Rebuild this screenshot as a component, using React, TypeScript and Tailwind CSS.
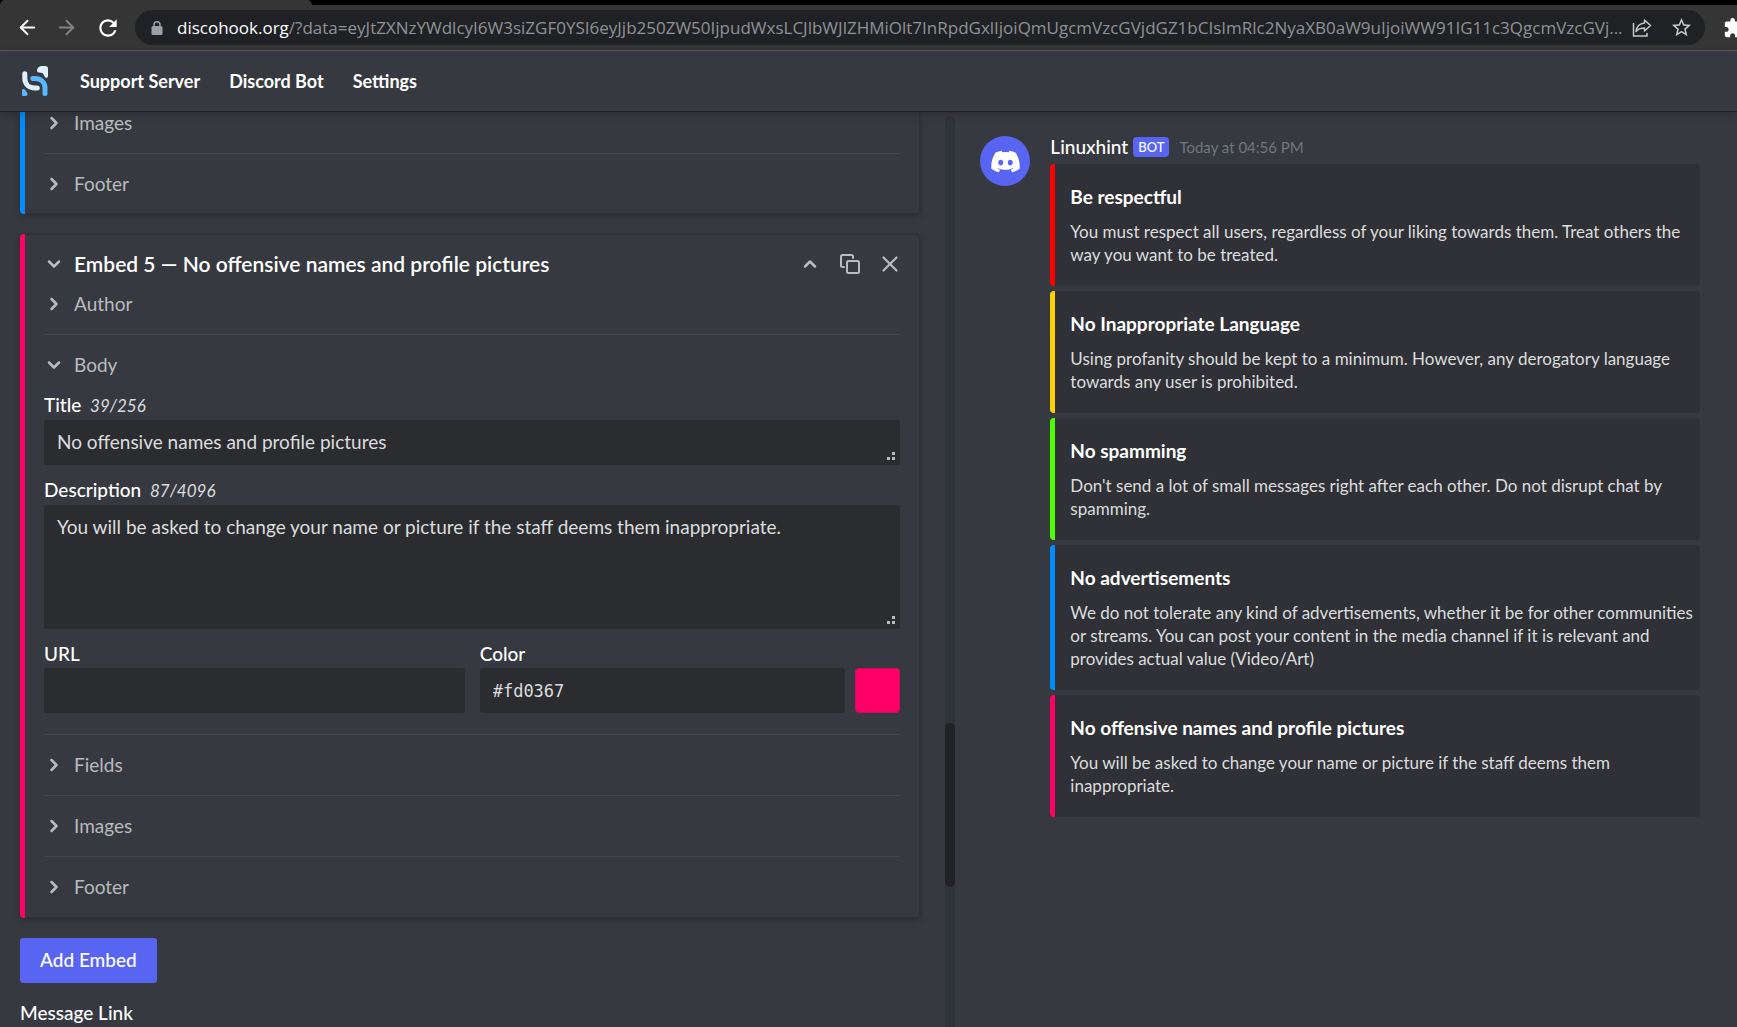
import React from 'react';
import { ChevronDown, ChevronRight, ChevronUp, X, ArrowLeft, ArrowRight } from 'lucide-react';
import { FaDiscord } from 'react-icons/fa';
import { MdRefresh, MdStarBorder, MdExtension } from 'react-icons/md';

const urlQuery =
  '/?data=eyJtZXNzYWdlcyI6W3siZGF0YSI6eyJjb250ZW50IjpudWxsLCJlbWJlZHMiOlt7InRpdGxlIjoiQmUgcmVzcGVjdGZ1bCIsImRlc2NyaXB0aW9uIjoiWW91IG11c3QgcmVzcGVj...';

const embeds = [
  {
    title: 'Be respectful',
    description: 'You must respect all users, regardless of your liking towards them. Treat others the way you want to be treated.',
    bar: 'border-[#ff0000]',
  },
  {
    title: 'No Inappropriate Language',
    description: 'Using profanity should be kept to a minimum. However, any derogatory language towards any user is prohibited.',
    bar: 'border-[#ffd000]',
  },
  {
    title: 'No spamming',
    description: "Don't send a lot of small messages right after each other. Do not disrupt chat by spamming.",
    bar: 'border-[#4dff00]',
  },
  {
    title: 'No advertisements',
    description:
      'We do not tolerate any kind of advertisements, whether it be for other communities or streams. You can post your content in the media channel if it is relevant and provides actual value (Video/Art)',
    bar: 'border-[#008cff]',
  },
  {
    title: 'No offensive names and profile pictures',
    description: 'You will be asked to change your name or picture if the staff deems them inappropriate.',
    bar: 'border-[#ff0066]',
  },
];

const Logo: React.FC = () => (
  <svg width="26" height="30" viewBox="0 0 26 30" fill="none" strokeLinecap="round">
    <path d="M2.800 7.800V12c0 6 4 10 10 10h2.500" stroke="#e0f0ff" strokeWidth="5" />
    <path d="M10.800 12.600h2c6.500 0 10.200 4 10.200 9.500v5.300" stroke="#58b9ff" strokeWidth="5" />
    <path d="M15 4C15.500 1.500 17.500 0 20 0h3C25 0 26 1 26 2.500V10c0 2-2 2.500-3 1L20.500 7 17 6.500C15.500 6.300 14.800 5.300 15 4Z" fill="#e0f0ff" />
    <path d="M0 24.500c0-1.500 2-2 3-.7l2 2.700c1 1.800.5 3.500-1.500 3.500h-2C.5 30 0 29.500 0 28.500Z" fill="#58b9ff" />
  </svg>
);

const LockIcon: React.FC = () => (
  <svg className="shrink-0" width="12" height="14" viewBox="0 0 12 14" fill="none">
    <rect x="0.500" y="5" width="11" height="9" rx="1.500" fill="#9aa0a6" />
    <path d="M3 6V3.800a3 3 0 0 1 6 0V6" stroke="#9aa0a6" strokeWidth="1.500" />
  </svg>
);

const ShareIcon: React.FC = () => (
  <svg width="20" height="20" viewBox="0 0 20 20" fill="none" stroke="currentColor" strokeWidth="1.500">
    <path d="M1.500 5v13h13.500v-3" />
    <path d="M12.500 2 18.500 7.500l-6 5.500V10c-4 0-6.500 1-8.500 3.500C4.500 9 7.500 5.500 12.500 5Z" strokeLinejoin="round" />
  </svg>
);

const CopyIcon: React.FC = () => (
  <svg width="20" height="20" viewBox="0 0 20 20" fill="none" stroke="currentColor" strokeWidth="2" strokeLinecap="round">
    <rect x="7" y="7" width="12" height="12" rx="1.500" />
    <path d="M4 13H2.500A1.500 1.500 0 0 1 1 11.500v-9A1.500 1.500 0 0 1 2.500 1h9A1.500 1.500 0 0 1 13 2.500V4" />
  </svg>
);

const ResizeGrip: React.FC = () => (
  <svg className="absolute right-[5px] bottom-[5px] pointer-events-none" width="8" height="8" fill="#b9bbbe">
    <rect x="5" y="0" width="3" height="3" />
    <rect x="0" y="5" width="3" height="3" />
    <rect x="5" y="5" width="3" height="3" />
  </svg>
);

const SectionToggle: React.FC<{ label: string; open?: boolean }> = ({ label, open }) => (
  <button className="flex w-full items-center gap-[10px] h-6 text-[19px] leading-6 text-[#b9bbbe]">
    {open ? <ChevronDown size={20} strokeWidth={3} /> : <ChevronRight size={20} strokeWidth={3} />}
    {label}
  </button>
);

const BrowserBar: React.FC = () => (
  <div className="shrink-0 bg-[#353535] border-b border-[#5c5c5c]">
    <div className="flex h-[5px] bg-black">
      <div className="w-[312px] rounded-t-lg bg-[#353535]"></div>
    </div>
    <div className="flex items-center h-[45px] text-white">
      <button aria-label="Back" className="ml-4"><ArrowLeft size={23} strokeWidth={2} /></button>
      <button aria-label="Forward" className="ml-4 text-[#838383]"><ArrowRight size={23} strokeWidth={2} /></button>
      <button aria-label="Reload" className="ml-[17px]"><MdRefresh size={26} /></button>
      <div className="flex flex-1 min-w-0 items-center ml-[14px] h-[35px] rounded-full bg-[#202124] pl-4 pr-3">
        <LockIcon />
        <div
          role="textbox"
          aria-label="Address"
          className="flex-1 min-w-0 ml-[14px] overflow-hidden whitespace-nowrap font-['Open_Sans',sans-serif] text-[17px] leading-6 text-[#8f9296]"
        >
          <span className="text-white">discohook.org</span>{urlQuery}
        </div>
        <button aria-label="Share" className="shrink-0 ml-2 text-[#c7c7c7]"><ShareIcon /></button>
        <button aria-label="Bookmark" className="shrink-0 ml-[18px] text-[#c7c7c7]"><MdStarBorder size={23} /></button>
      </div>
      <button aria-label="Extensions" className="shrink-0 ml-[18px] -mr-2"><MdExtension size={22} /></button>
    </div>
  </div>
);

const SiteHeader: React.FC = () => (
  <header className="relative z-10 flex shrink-0 items-center h-[61px] px-[22px] bg-[#36393f] border-b border-[#202225] shadow-[0_2px_8px_rgba(0,0,0,0.2)]">
    <Logo />
    <nav className="flex gap-[29px] ml-8 text-[18px] font-bold text-white">
      <a href="#">Support Server</a>
      <a href="#">Discord Bot</a>
      <a href="#">Settings</a>
    </nav>
  </header>
);

const fieldBox = 'block w-full rounded-[3px] bg-[#2b2c2f] px-[13px] text-[#dcddde] outline-none';
const fieldLabel = 'block mb-[2px] text-[19px] leading-6 font-medium text-white';
const counter = 'ml-1 text-[17px] italic font-normal text-[#dcddde]';
const section = 'border-b border-[#42454a] py-[18px]';

const Editor: React.FC = () => (
  <div className="flex-1 min-w-0 px-5">
    <div className="-mt-px mr-[5px]">
      <div className="border-l-[5px] border-[#008cff] rounded-b-[4px] mb-5 shadow-[0_2px_6px_rgba(0,0,0,0.25)]">
        <div className="border-r border-b border-[#2f3136] rounded-br-[4px] pl-[19px] pr-[19px]">
          <div className="border-b border-[#42454a] pb-[18px]"><SectionToggle label="Images" /></div>
          <div className="pt-[18px] pb-[17px]"><SectionToggle label="Footer" /></div>
        </div>
      </div>

      <div className="border-l-[5px] border-[#ff0066] rounded-[4px] mb-5 shadow-[0_2px_6px_rgba(0,0,0,0.25)]">
        <div className="border-y border-r border-[#2f3136] rounded-r-[4px] pl-[19px] pr-[19px]">
          <div className="flex items-center justify-between pt-[14px] pb-[13px] text-[#b9bbbe]">
            <button className="flex items-center gap-[10px] text-[21px] leading-[30px] font-semibold">
              <ChevronDown size={20} strokeWidth={3} />
              <span className="text-white">Embed 5 — No offensive names and profile pictures</span>
            </button>
            <div className="flex items-center gap-5">
              <button aria-label="Move up"><ChevronUp size={20} strokeWidth={3} /></button>
              <button aria-label="Duplicate"><CopyIcon /></button>
              <button aria-label="Delete" className="-mx-[3px]"><X size={26} strokeWidth={2} /></button>
            </div>
          </div>

          <div className="border-b border-[#42454a] pb-[18px]"><SectionToggle label="Author" /></div>

          <div className="border-b border-[#42454a] pt-[18px] pb-[21px]">
            <SectionToggle label="Body" open />
            <div className="flex flex-col gap-[13px] mt-4">
              <div>
                <label htmlFor="title" className={fieldLabel}>
                  Title <span className={counter}>39/256</span>
                </label>
                <div className="relative">
                  <textarea
                    id="title"
                    rows={1}
                    className={`${fieldBox} h-[45px] py-[10px] resize-none overflow-hidden text-[19px] leading-6`}
                    defaultValue="No offensive names and profile pictures"
                  />
                  <ResizeGrip />
                </div>
              </div>
              <div>
                <label htmlFor="description" className={fieldLabel}>
                  Description <span className={counter}>87/4096</span>
                </label>
                <div className="relative">
                  <textarea
                    id="description"
                    className={`${fieldBox} h-[124px] py-[10px] resize-none overflow-hidden text-[19px] leading-6`}
                    defaultValue="You will be asked to change your name or picture if the staff deems them inappropriate."
                  />
                  <ResizeGrip />
                </div>
              </div>
              <div className="grid grid-cols-2 gap-[15px]">
                <div>
                  <label htmlFor="url" className={fieldLabel}>URL</label>
                  <input id="url" className={`${fieldBox} h-[45px] text-[19px]`} />
                </div>
                <div>
                  <label htmlFor="color" className={fieldLabel}>Color</label>
                  <div className="flex gap-[10px]">
                    <input
                      id="color"
                      className={`${fieldBox} flex-1 min-w-0 h-[45px] font-['DejaVu_Sans_Mono',monospace] text-[17px]`}
                      defaultValue="#fd0367"
                    />
                    <button aria-label="Pick color" className="shrink-0 w-[45px] h-[45px] rounded-[4px] bg-[#ff0066] border border-[#d60a5c]"></button>
                  </div>
                </div>
              </div>
            </div>
          </div>

          <div className={section}><SectionToggle label="Fields" /></div>
          <div className={section}><SectionToggle label="Images" /></div>
          <div className="py-[18px]"><SectionToggle label="Footer" /></div>
        </div>
      </div>

      <button className="h-[45px] px-5 rounded-[3px] bg-[#5865f2] text-[19px] font-medium text-white">Add Embed</button>
      <label htmlFor="message-link" className="block mt-[18px] text-[19px] leading-6 font-medium text-white">Message Link</label>
      <input id="message-link" className={`${fieldBox} mt-[2px] h-[45px] text-[19px]`} />
    </div>
  </div>
);

const Preview: React.FC = () => (
  <div className="flex flex-1 min-w-0 gap-5 pl-[25px] pr-9 pt-6">
    <div className="flex shrink-0 items-center justify-center w-[50px] h-[50px] rounded-full bg-[#5865f2] text-white">
      <FaDiscord size={31} />
    </div>
    <div className="flex-1 min-w-0 max-w-[650px]">
      <div className="flex items-center h-[22px] mb-[6px]">
        <span className="text-[19px] leading-6 font-medium text-white">Linuxhint</span>
        <span className="ml-[5px] px-[5px] h-5 rounded-[4px] bg-[#5865f2] text-[13px] leading-5 font-medium text-white">BOT</span>
        <span className="ml-[10px] text-[15px] leading-6 text-[#72767d]">Today at 04:56 PM</span>
      </div>
      <div className="flex flex-col gap-[5px]">
        {embeds.map((embed) => (
          <article key={embed.title} className={`rounded-[4px] border-l-[5px] bg-[#2f3136] py-5 pl-[15px] pr-1 ${embed.bar}`}>
            <h3 className="text-[19px] leading-[25px] font-bold text-white mb-[11px]">{embed.title}</h3>
            <p className="text-[17px] leading-[23px] text-[#dcddde]">{embed.description}</p>
          </article>
        ))}
      </div>
    </div>
  </div>
);

const App: React.FC = () => (
  <div className="flex flex-col h-screen overflow-hidden bg-[#36393f] font-['Lato',sans-serif]">
    <BrowserBar />
    <SiteHeader />
    <main className="flex flex-1 min-h-0">
      <div className="flex w-[55%] min-h-0">
        <Editor />
        <div className="flex flex-col shrink-0 w-[10px] mt-1 rounded-t-full bg-[#2e3338]">
          <div className="mt-[607px] h-[164px] rounded-full bg-[#202225]"></div>
        </div>
      </div>
      <Preview />
    </main>
  </div>
);

export default App;
